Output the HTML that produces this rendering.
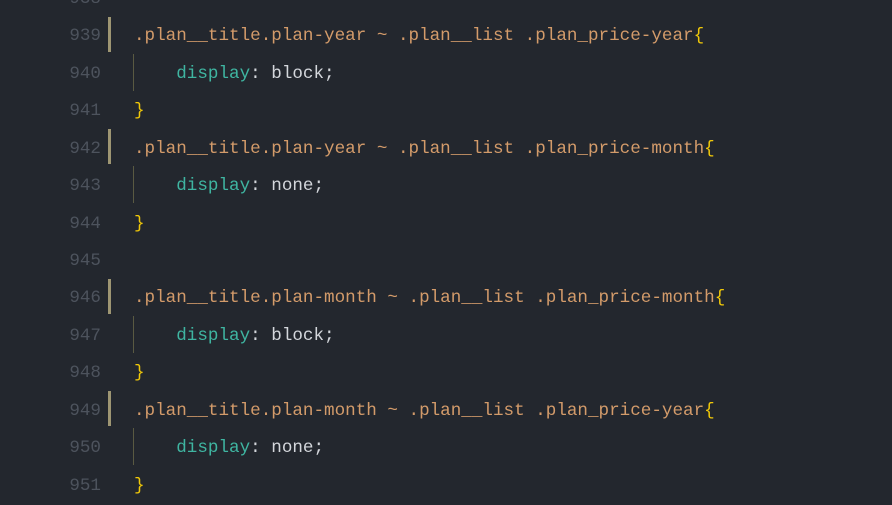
<!DOCTYPE html>
<html><head><style>
html,body{margin:0;padding:0;background:#23272e;width:892px;height:505px;overflow:hidden}
.l{position:absolute;left:0;height:37px;line-height:37px;font-family:"Liberation Mono",monospace;font-size:17.6px;white-space:pre;color:#d4d7dc}
.n{position:absolute;left:40px;width:61px;text-align:right;color:#4d535d}
.c{position:absolute;left:134px}
.s{color:#d39b6a}.k{color:#3fb5a1}.b{color:#f0c808}
.bar{position:absolute;left:108px;width:3px;height:35px;background:#9e9673}
.g{position:absolute;left:133px;width:1px;height:37px;background:#5a5a42}
</style></head><body>
<div class="l" style="top:-19px"><span class="n">938</span></div>
<div class="l" style="top:18px"><span class="n">939</span><span class="c"><span class="s">.plan__title.plan-year ~ .plan__list .plan_price-year</span><span class="b">{</span></span></div>
<div class="l" style="top:56px"><span class="n">940</span><span class="c">    <span class="k">display</span>: block;</span></div>
<div class="l" style="top:93px"><span class="n">941</span><span class="c"><span class="b">}</span></span></div>
<div class="l" style="top:131px"><span class="n">942</span><span class="c"><span class="s">.plan__title.plan-year ~ .plan__list .plan_price-month</span><span class="b">{</span></span></div>
<div class="l" style="top:168px"><span class="n">943</span><span class="c">    <span class="k">display</span>: none;</span></div>
<div class="l" style="top:206px"><span class="n">944</span><span class="c"><span class="b">}</span></span></div>
<div class="l" style="top:243px"><span class="n">945</span></div>
<div class="l" style="top:280px"><span class="n">946</span><span class="c"><span class="s">.plan__title.plan-month ~ .plan__list .plan_price-month</span><span class="b">{</span></span></div>
<div class="l" style="top:318px"><span class="n">947</span><span class="c">    <span class="k">display</span>: block;</span></div>
<div class="l" style="top:355px"><span class="n">948</span><span class="c"><span class="b">}</span></span></div>
<div class="l" style="top:393px"><span class="n">949</span><span class="c"><span class="s">.plan__title.plan-month ~ .plan__list .plan_price-year</span><span class="b">{</span></span></div>
<div class="l" style="top:430px"><span class="n">950</span><span class="c">    <span class="k">display</span>: none;</span></div>
<div class="l" style="top:468px"><span class="n">951</span><span class="c"><span class="b">}</span></span></div>
<div class="bar" style="top:17px"></div>
<div class="bar" style="top:129px"></div>
<div class="bar" style="top:279px"></div>
<div class="bar" style="top:391px"></div>
<div class="g" style="top:54px"></div>
<div class="g" style="top:166px"></div>
<div class="g" style="top:316px"></div>
<div class="g" style="top:428px"></div>
</body></html>
